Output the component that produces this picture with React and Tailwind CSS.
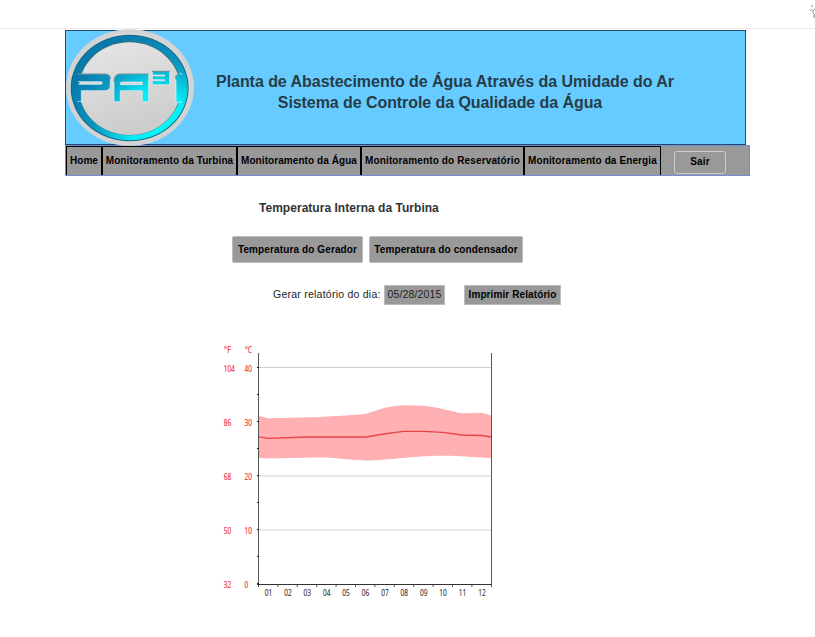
const months = ['01', '02', '03', '04', '05', '06', '07', '08', '09', '10', '11', '12'];

const scale = [
  { f: '104', c: '40', y: 368 },
  { f: '86', c: '30', y: 422 },
  { f: '68', c: '20', y: 476 },
  { f: '50', c: '10', y: 530 },
  { f: '32', c: '0', y: 584 },
];

function Logo() {
  return (
    <svg className="block h-[117px] w-[128px] shrink-0" viewBox="18 12 384 351" preserveAspectRatio="none">
      <defs>
        <linearGradient id="plate" x1="0" y1="0" x2="0.3" y2="1">
          <stop offset="0" stopColor="#e6e6e6" />
          <stop offset="1" stopColor="#cdcdcd" />
        </linearGradient>
        <radialGradient id="glow" gradientUnits="userSpaceOnUse" cx="290" cy="290" r="270">
          <stop offset="0" stopColor="#08fafc" />
          <stop offset="0.35" stopColor="#06eaf4" />
          <stop offset="0.7" stopColor="#0a94c0" />
          <stop offset="1" stopColor="#087aac" />
        </radialGradient>
      </defs>
      <ellipse cx="210" cy="187.500" rx="192" ry="175" fill="#d0d4d6" />
      <ellipse cx="210" cy="188" rx="180" ry="163" fill="#d9d9d9" />
      <ellipse cx="209" cy="189" rx="177" ry="160" fill="#176a80" />
      <ellipse cx="209" cy="189" rx="174" ry="157" fill="url(#glow)" />
      <ellipse cx="209" cy="190" rx="154" ry="141" fill="#356f7a" />
      <ellipse cx="209" cy="191" rx="152" ry="139" fill="url(#plate)" />
      <g fill="url(#glow)" stroke="#e8eeee" strokeWidth="2">
        <path d="M52 147H134Q151 147 151 162V181Q151 197 134 197H64V229H52V178H122Q127 178 127 174Q127 170 122 170H52Z" />
        <path d="M162 170Q162 147 181 147H266V230H247V197H181V230H162ZM181 179H247V171H187Q181 171 181 175Z" fillRule="evenodd" />
        <path d="M277 139H329V179H277V167H314V164H277V153H314V150H277Z" />
        <path d="M345 155L358 146H364V232H348V166H345Z" />
      </g>
      <path d="M40 148H58V168H54V180H60V228H44L36 206Z" fill="url(#glow)" />
      <path d="M360 150H378L382 190L375 228H360Z" fill="url(#glow)" />
      <path d="M50 147H136Q151 147 151 162M162 170Q162 147 181 147H266M276 139H329M345 155L358 146" fill="none" stroke="#27606e" strokeWidth="2" />
    </svg>
  );
}

function Chart() {
  return (
    <svg className="ml-[215px] mt-[35px] block h-[265px] w-[290px]" viewBox="215 340 290 265" fontFamily="'Open Sans', 'Noto Sans', sans-serif">
      {scale.slice(0, 4).map((s) => (
        <path key={s.c} d={`M259 ${s.y - (s.y > 450 ? 0 : 0.5)}H491`} stroke="#cfcfcf" />
      ))}
      <path d="M259 416L268 418.300C290 417.700 330 417.500 366 413.800L384 408Q395 405.500 404 405.300L423 405.700C438 407 450 411 462 413.300L482 412.800L491 415.500V458C470 457 456 455.500 443 455.700C410 456 390 460 366 460.500C345 459.500 335 457.300 317 457.500L268 458.500L259 458Z" fill="#ffb0b2" />
      <path d="M259 436.800L268 438.300L307 437H366L384 434L403 431.400H424L443 432.400L462 435L482 435.500L491 437" fill="none" stroke="#e8424b" strokeWidth="1.300" />
      <path d="M258.500 353V585M491.500 353V587" stroke="#555" fill="none" />
      <path d="M257 584.500H492" stroke="#333" />
      {[368, 395, 422, 449, 476, 503, 530, 557, 584].map((y) => (
        <path key={y} d={`M257 ${y - 0.5}H259`} stroke="#222" />
      ))}
      {months.map((m, i) => (
        <g key={m}>
          <path d={`M${258.5 + i * 19.4} 585V587`} stroke="#555" />
          <text x={268.5 + i * 19.4} y="595.600" fontSize="8.500" textAnchor="middle" textLength="7.500" lengthAdjust="spacingAndGlyphs" fill="#333" stroke="#333" strokeWidth="0.150">{m}</text>
        </g>
      ))}
      <g fill="#f0343b" stroke="#f0343b" strokeWidth="0.200" fontSize="8.500">
        <text x="224" y="353.200" textLength="7" lengthAdjust="spacingAndGlyphs">°F</text>
        <text x="245" y="353.200" textLength="7" lengthAdjust="spacingAndGlyphs">°C</text>
        {scale.map((s) => (
          <g key={s.f}>
            <text x="223.700" y={s.y + 3.6} textLength={s.f.length * 3.7} lengthAdjust="spacingAndGlyphs">{s.f}</text>
            <text x="244.500" y={s.y + 3.6} textLength={s.c.length * 3.7} lengthAdjust="spacingAndGlyphs">{s.c}</text>
          </g>
        ))}
      </g>
    </svg>
  );
}

const cell = 'flex h-[29px] items-center justify-center whitespace-nowrap border-t border-black pb-[2px]';

export default function App() {
  return (
    <div className="relative h-[637px] w-[815px] overflow-hidden bg-white font-['Liberation_Sans',Arial,sans-serif] text-[10px] text-black">
      <div className="flex h-[29px] justify-end border-b border-[#ececec]">
        <svg className="mt-[5px] h-[14px] w-[5px]" viewBox="0 0 5 14">
          <path d="M2 0V2M0 5H2M5 4Q2 5 3 8L5 10M4 10V13" fill="none" stroke="#888" strokeWidth="1" />
        </svg>
      </div>
      <header className="ml-[65px] mt-px flex h-[115px] w-[681px] border border-[#24476c] bg-[#6cf]">
        <div className="-mt-[2px] h-[113px]"><Logo /></div>
        <div className="ml-[22px] mt-[40px] w-[458px] text-center text-[16px] font-bold leading-[21px] text-[#273c48]">
          <h1 className="whitespace-nowrap tracking-[-0.045px]">Planta de Abastecimento de Água Através da Umidade do Ar</h1>
          <h2 className="-ml-[10px] whitespace-nowrap tracking-[-0.07px]">Sistema de Controle da Qualidade da Água</h2>
        </div>
      </header>
      <nav className="ml-[65px] h-[31px] w-[685px] bg-[#6f90d8] p-px font-bold">
        <div className="flex h-[29px] bg-[#999]">
          <div className={`${cell} w-[37px] border-l border-r-2`}>Home</div>
          <div className={`${cell} w-[135px] border-r-2 tracking-[0.09px]`}>Monitoramento da Turbina</div>
          <div className={`${cell} w-[124px] border-r-2 tracking-[0.07px]`}>Monitoramento da Água</div>
          <div className={`${cell} w-[163px] border-r-2 tracking-[0.13px]`}>Monitoramento do Reservatório</div>
          <div className={`${cell} w-[136px] border-r tracking-[0.11px]`}>Monitoramento da Energia</div>
          <button className="ml-[13px] mt-[5px] h-[23px] w-[52px] rounded-[3px] border border-[#ccc] pb-[2px] tracking-[0.1px]">Sair</button>
        </div>
      </nav>
      <main>
        <h3 className="ml-[259px] mt-[24px] h-4 whitespace-nowrap text-[12px] font-bold leading-4 tracking-[0.03px] text-[#333]">Temperatura Interna da Turbina</h3>
        <div className="ml-[232px] mt-5 flex gap-[6px] font-bold">
          <button className="h-[27px] w-[131px] whitespace-nowrap rounded-[2px] border border-[#bbb] bg-[#999] tracking-[0.12px]">Temperatura do Gerador</button>
          <button className="h-[27px] w-[154px] whitespace-nowrap rounded-[2px] border border-[#bbb] bg-[#999] tracking-[0.12px]">Temperatura do condensador</button>
        </div>
        <div className="ml-[273px] mt-[22px] flex h-5 items-center whitespace-nowrap">
          <span className="w-[111px] pb-px text-[10.5px] tracking-[0.24px] text-[#222]">Gerar relatório do dia:</span>
          <span className="flex h-5 w-[61px] items-center justify-center border border-[#bbb] bg-[#999] pb-px text-[10.5px] tracking-[0.15px] text-[#222]">05/28/2015</span>
          <button className="ml-[19px] h-5 w-[97px] border border-[#bbb] bg-[#999] pb-px font-bold tracking-[0.1px]">Imprimir Relatório</button>
        </div>
        <Chart />
      </main>
    </div>
  );
}
